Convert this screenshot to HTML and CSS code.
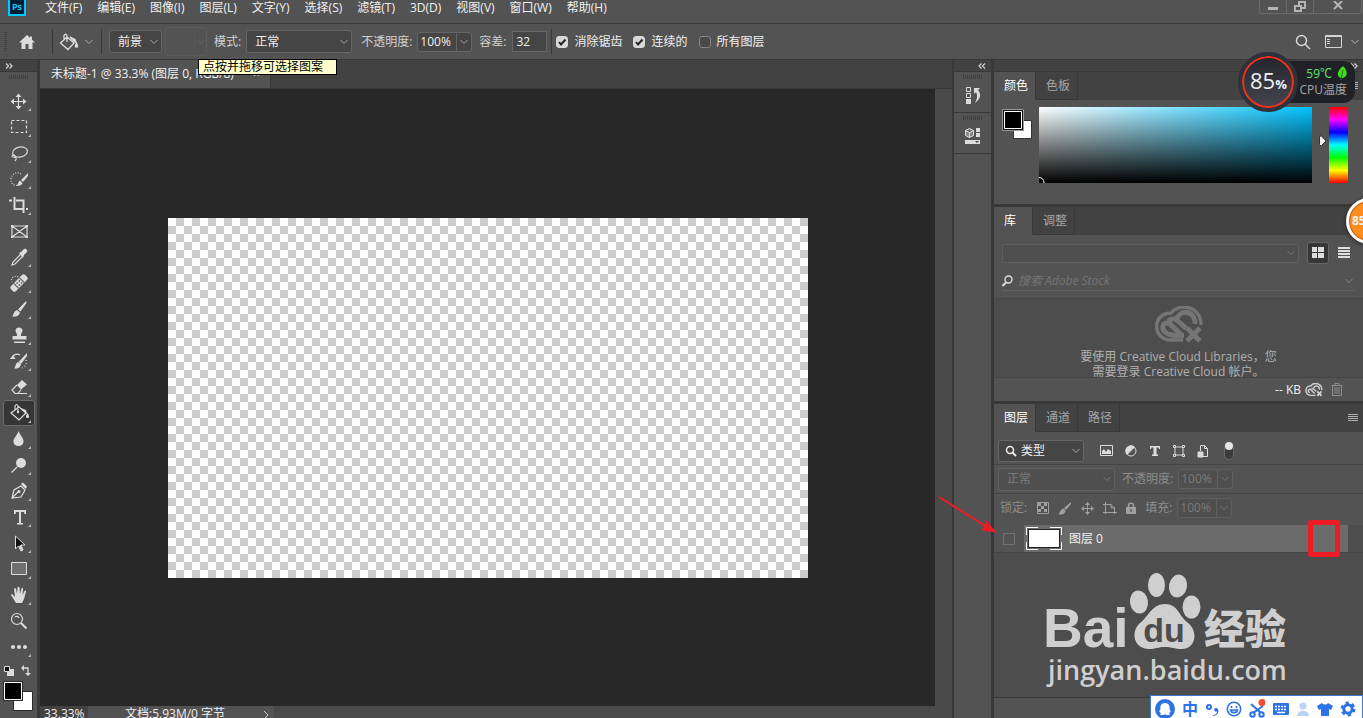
FILE: index.html
```html
<!DOCTYPE html>
<html lang="zh-CN">
<head>
  <meta charset="UTF-8" />
  <meta name="viewport" content="width=device-width, initial-scale=1.0"/>
  <title>未标题-1</title>
  <link rel="stylesheet" href="styles.css">
</head>
<body>

  <!-- Menu bar -->
  <header class="menubar">
    <svg class="logo" width="18" height="18" viewBox="0 0 18 18"><rect x="1" y="1" width="16" height="16" fill="#001d33" stroke="#00c8ff" stroke-width="2"/><text x="9" y="12" text-anchor="middle" font-size="9" font-weight="bold" fill="#00c8ff">Ps</text></svg>
    <nav class="menus">
      <a href="#">文件(F)</a>
      <a href="#">编辑(E)</a>
      <a href="#">图像(I)</a>
      <a href="#">图层(L)</a>
      <a href="#">文字(Y)</a>
      <a href="#">选择(S)</a>
      <a href="#">滤镜(T)</a>
      <a href="#">3D(D)</a>
      <a href="#">视图(V)</a>
      <a href="#">窗口(W)</a>
      <a href="#">帮助(H)</a>
    </nav>
    <div class="window-buttons">
      <button aria-label="最小化"><svg width="12" height="12" viewBox="0 0 12 12"><path d="M1 6h10v3H1z" fill="#b5b5b5"/></svg></button>
      <button aria-label="还原"><svg width="12" height="12" viewBox="0 0 12 12" fill="none" stroke="#b5b5b5" stroke-width="2"><path d="M5 4V1h6v6H8M1 5h6v5H1z"/></svg></button>
      <button aria-label="关闭" class="close"><svg width="12" height="12" viewBox="0 0 12 12" stroke="#b5b5b5" stroke-width="2"><path d="M2 0l8 8M10 0L2 8"/></svg></button>
    </div>
  </header>

  <!-- Options bar -->
  <div class="options">
    <span class="grip-v"></span>
    <button class="home" aria-label="主页"><svg width="18" height="16" viewBox="0 0 18 16" fill="#dcdcdc"><path d="M9 1L1 8.500h2.500V15h4v-5h3v5h4V8.500H17L14 5.700V2.500h-2v1.300z"/></svg></button>
    <span class="sep"></span>
    <button class="bucket" aria-label="油漆桶">
      <svg width="20" height="18" viewBox="0 0 20 18" fill="none" stroke="#dcdcdc" stroke-width="1.300"><path d="M8 4l7 6-6 6.500-7.500-6.500zM5 8V2.500Q6.500 0 8 2.500V9"/><path d="M11 4l5 2.500 1 3-3-2zM17.500 10c1.500 3 1.500 4 0 4s-1.500-1 0-4z" fill="#dcdcdc"/></svg>
      <svg width="8" height="6" viewBox="0 0 8 6" fill="none" stroke="#aaa"><path d="M.5 1L4 4.500 7.500 1"/></svg>
    </button>
    <span class="sep"></span>
    <select class="select fill-source" aria-label="填充源"><option>前景</option></select>
    <button class="pattern" aria-label="图案" disabled><span></span></button>
    <label for="mode" class="muted">模式:</label>
    <select id="mode" class="select mode"><option>正常</option></select>
    <label for="opacity" class="muted opacity-label">不透明度:</label>
    <span class="combo"><input id="opacity" type="text" value="100%"><button aria-label="不透明度滑块"></button></span>
    <label for="tolerance" class="muted">容差:</label>
    <input id="tolerance" class="number" type="text" value="32">
    <span class="sep"></span>
    <label class="check"><input type="checkbox" checked>消除锯齿</label>
    <label class="check"><input type="checkbox" checked>连续的</label>
    <label class="check"><input type="checkbox">所有图层</label>
    <div class="options-right">
      <button aria-label="搜索"><svg width="16" height="16" viewBox="0 0 16 16" fill="none" stroke="#d5d5d5" stroke-width="1.500"><circle cx="6.500" cy="6.500" r="5"/><path d="M10 10l5 5"/></svg></button>
      <button aria-label="工作区">
        <svg width="17" height="13" viewBox="0 0 17 13" fill="none" stroke="#d5d5d5"><path d="M.5.5h16v12H.5zM.5 1.500h16"/><path d="M2 4.500h3M2 6.500h3M2 8.500h3"/></svg>
        <svg width="8" height="6" viewBox="0 0 8 6" fill="none" stroke="#bbb"><path d="M.5 1L4 4.500 7.500 1"/></svg>
      </button>
    </div>
    <div class="tooltip">点按并拖移可选择图案</div>
  </div>

  <main class="workspace">

    <!-- Tools -->
    <aside class="tools">
      <div class="strip left"><svg width="8" height="6" viewBox="0 0 8 6" fill="none" stroke="#ccc" stroke-width="1.300"><path d="M1 .5L3.500 3 1 5.500M4.500.5L7 3 4.500 5.500"/></svg></div>
      <span class="grip"></span>
      <button class="tool" aria-label="移动"><svg viewBox="0 0 32 26"><path class="l" d="M15.500 7v13M9.500 13.500h12"/><path class="f" d="M15.500 5.500l3 3.500h-6zM15.500 21.500l3-3.500h-6zM7.500 13.500l3.500-3v6zM23.500 13.500l-3.500-3v6z"/><path class="t" d="M28 20v3h-3z"/></svg></button>
      <button class="tool" aria-label="选框"><svg viewBox="0 0 32 26"><path class="l" stroke-dasharray="3 2" d="M8.500 6.500h15v12h-15z"/><path class="t" d="M28 20v3h-3z"/></svg></button>
      <button class="tool" aria-label="套索"><svg viewBox="0 0 32 26"><ellipse class="l" cx="17" cy="12" rx="7.500" ry="5" transform="rotate(-12 17 12)"/><path class="l" d="M11 15c-3 0-2 3 1 2 1-1-1-2-1-2M12 17c2 1 1 3 0 4"/><path class="t" d="M28 20v3h-3z"/></svg></button>
      <button class="tool" aria-label="快速选择"><svg viewBox="0 0 32 26"><path class="l" stroke-dasharray="1 1.500" d="M18 8c-4-3-10 0-10 5.500s4 6 6 6"/><path class="f" d="M25 7v3l-5 6-2-2zM17 14.500l2.500 2.500c-1 3-4 3-6 2.500 2-1 1.500-4 3.500-5z"/><path class="t" d="M28 20v3h-3z"/></svg></button>
      <button class="tool" aria-label="裁剪"><svg viewBox="0 0 32 26"><path class="b" d="M6 8.500h3M11.500 5v12H20M23 17h2M13 8.500h7.500V21"/><path class="t" d="M28 20v3h-3z"/></svg></button>
      <button class="tool" aria-label="图框"><svg viewBox="0 0 32 26"><path class="l" d="M9 8h15v11H9zM9 8l15 11M24 8L9 19"/><path class="f" d="M8 7h2v2H8zM23 7h2v2h-2zM8 18h2v2H8zM23 18h2v2h-2z"/></svg></button>
      <button class="tool" aria-label="吸管"><svg viewBox="0 0 32 26"><path class="l" d="M17.500 10.500L10 18l-1 3 3-1 7.500-7.500"/><path class="f" d="M16 9l2-1 3-3c2-1 4 1 3 3l-3 3-1 3z"/><path class="t" d="M28 20v3h-3z"/></svg></button>
      <button class="tool" aria-label="修复画笔"><svg viewBox="0 0 32 26"><path class="l" stroke-dasharray="1 1.500" d="M15 7c-3-2-8 1-6 5"/><g transform="rotate(-45 16 13)"><rect class="f" x="6" y="9.500" width="20" height="7" rx="2"/><path d="M12 9.500v7M20 9.500v7" stroke="#535353"/><path d="M14 11h1.500v1.500H14zM17 11h1.500v1.500H17zM14 14h1.500v1.500H14zM17 14h1.500v1.500H17z" fill="#535353"/></g><path class="t" d="M28 20v3h-3z"/></svg></button>
      <button class="tool" aria-label="画笔"><svg viewBox="0 0 32 26"><path class="f" d="M23 5l.5 2-6 8.500-2.500-2zM14 14l3 2.500c-1 4-5 4.500-8 4 2-1.500 1-5 5-6.500z"/><path class="t" d="M28 20v3h-3z"/></svg></button>
      <button class="tool" aria-label="图章"><svg viewBox="0 0 32 26"><path class="f" d="M14 13c0-2-1.500-2.500-1.500-4.500 0-4 7-4 7 0 0 2-1.500 2.500-1.500 4.500v1h5.500v3.500h-14V14H14zM11 19.500h11V21H11z"/><path class="t" d="M28 20v3h-3z"/></svg></button>
      <button class="tool" aria-label="历史记录画笔"><svg viewBox="0 0 32 26"><path class="f" d="M24 5v3l-6 8-2.500-2zM15 14l3 2.500c-1 3.500-4 4.500-7 4 2-1.500 1-5 4-6.500zM7 11l3-4 2.500 4z"/><path class="l" d="M10 8c2-2 5-2 7-1"/><path class="l" stroke-dasharray="1 2" d="M23 12c1 4-1 7-4 8"/><path class="t" d="M28 20v3h-3z"/></svg></button>
      <button class="tool" aria-label="橡皮擦"><svg viewBox="0 0 32 26"><path class="f" d="M14 11l5-5 5 4.500-6 5z"/><path class="l" d="M14 11l-5 5 3 3.500h3l3-4M14 19.500h10"/><path class="t" d="M28 20v3h-3z"/></svg></button>
      <button class="tool selected" aria-label="油漆桶"><svg viewBox="0 0 32 26"><path class="l" d="M16 7l7 6-7 7-8-7zM12 11V6q1.500-3 3 0v6"/><circle class="f" cx="15" cy="12" r="1.200"/><path class="f" d="M18 8l5 2 1 4-3-2zM24.500 13c2 3 2 5 0 5s-2-2 0-5z"/><path class="t" d="M28 20v3h-3z"/></svg></button>
      <button class="tool" aria-label="模糊"><svg viewBox="0 0 32 26"><path class="f" d="M15.500 5c2 5 5 6.500 5 10.500 0 6-10 6-10 0C10.500 11.500 14 10 15.500 5z"/><path class="t" d="M28 20v3h-3z"/></svg></button>
      <button class="tool" aria-label="减淡"><svg viewBox="0 0 32 26"><circle class="f" cx="18" cy="11" r="5"/><path class="l" stroke-width="2" d="M14 15l-5.500 5.500"/><path class="t" d="M28 20v3h-3z"/></svg></button>
      <button class="tool" aria-label="钢笔"><svg viewBox="0 0 32 26"><path class="l" d="M9 20l2-8 7-4 4 4-4 7zM9 20l6-6"/><path class="f" d="M18 6l2-1.500 4 4-1.500 2.500z"/><circle class="f" cx="16" cy="13.500" r="1.500"/><path class="t" d="M28 20v3h-3z"/></svg></button>
      <button class="tool" aria-label="文字"><svg viewBox="0 0 32 26"><path class="f" d="M11 6h12v4h-1.500l-.5-2h-3v11h2v1.500h-6V19h2V8h-3l-.5 2H11z"/><path class="t" d="M28 20v3h-3z"/></svg></button>
      <button class="tool" aria-label="路径选择"><svg viewBox="0 0 32 26"><path d="M12.500 6v13l3-3 2.500 5 2-1-2-5h4z" fill="#111" stroke="#dcdcdc"/><path class="f" d="M16 16l2-1 2 5-2 1z"/><path class="t" d="M28 20v3h-3z"/></svg></button>
      <button class="tool" aria-label="矩形"><svg viewBox="0 0 32 26"><path d="M8.500 6.500h15v12h-15z" fill="#707070" stroke="#dcdcdc"/><path class="t" d="M28 20v3h-3z"/></svg></button>
      <button class="tool" aria-label="抓手"><svg viewBox="0 0 32 26"><path class="f" d="M13 21l-5-8c0-1.500 1.500-1.500 2 0l2 2-1-8c.5-1.500 1.500-1.500 2 0l1 5 .5-6.500c.5-1 1.500-1 2 0l.5 6.500 1.500-5.500c.5-1 2-1 1.500.5L19.500 13l2-4c1-1 2-.5 1.500.5L21 17l-2 4z"/><path class="t" d="M28 20v3h-3z"/></svg></button>
      <button class="tool" aria-label="缩放"><svg viewBox="0 0 32 26"><circle class="l" cx="14" cy="11" r="5.500"/><path class="b" d="M18 15l5.500 5.500"/><path class="l" d="M12 9c1-1 3-1 4 1"/></svg></button>
      <button class="tool" aria-label="更多"><svg viewBox="0 0 32 26"><circle class="f" cx="10" cy="13" r="2"/><circle class="f" cx="16" cy="13" r="2"/><circle class="f" cx="22" cy="13" r="2"/><path class="t" d="M28 20v3h-3z"/></svg></button>
      <svg class="tool-colors" width="34" height="54" viewBox="0 0 34 54">
        <path d="M7 9h7v7H7z" fill="#dcdcdc"/><path d="M4.500 6.500h5v5h-5z" fill="#111" stroke="#dcdcdc"/>
        <path d="M23 8h5v6" fill="none" stroke="#dcdcdc" stroke-width="1.300"/><path d="M24 5v6l-3-3zM25 13h6l-3 3z" fill="#dcdcdc"/>
        <path d="M13.500 31.500h19v19h-19z" fill="#fff" stroke="#2b2b2b"/>
        <path d="M3 21h20v20H3z" fill="#2b2b2b"/><path d="M4.500 22.500h17v17h-17z" fill="#000" stroke="#fff"/>
      </svg>
    </aside>

    <!-- Document -->
    <section class="document">
      <div class="doc-tabs">
        <div class="doc-tab"><span>未标题-1 @ 33.3% (图层 0, RGB/8)</span><button aria-label="关闭文档">×</button></div>
      </div>
      <div class="doc-view">
        <div class="stage"><div class="artboard"></div></div>
        <div class="scrollbar"></div>
      </div>
      <div class="status">
        <span class="zoom">33.33%</span>
        <div class="doc-info"><span>文档:5.93M/0 字节</span><svg width="6" height="10" viewBox="0 0 6 10" fill="none" stroke="#ccc"><path d="M1 1l4 4-4 4"/></svg></div>
      </div>
    </section>

    <!-- Collapsed dock -->
    <aside class="dock">
      <div class="strip right"><svg width="8" height="6" viewBox="0 0 8 6" fill="none" stroke="#ccc" stroke-width="1.300"><path d="M3.500.5L1 3l2.500 2.500M7 .5L4.500 3 7 5.500"/></svg></div>
      <button aria-label="历史记录"><span class="grip"></span><svg width="18" height="18" viewBox="0 0 18 18"><path d="M2.500 1.500h4v4h-4zM2.500 7.500h4v4h-4z" fill="none" stroke="#dcdcdc"/><path d="M2 13h5v5H2zM10 2h6l-2 2c4 5 2 9-3 13 2-4 3-7 1-11l-2 2z" fill="#dcdcdc"/></svg></button>
      <button aria-label="属性"><span class="grip"></span><svg width="18" height="18" viewBox="0 0 18 18"><path d="M5.500 1.500l4 2v5l-4 2-4-2v-5zM1.500 3.500l4 2 4-2M5.500 5.500v5" fill="#888" stroke="#dcdcdc"/><path d="M12 1h4v4h-4zM12 6h4v4h-4zM1 13h15v4H1z" fill="#dcdcdc"/><path d="M11 14h4l-2 2z" fill="#444"/></svg></button>
    </aside>

    <!-- Panels -->
    <aside class="panels">
      <div class="strip right"><svg width="8" height="6" viewBox="0 0 8 6" fill="none" stroke="#ccc" stroke-width="1.300"><path d="M1 .5L3.500 3 1 5.500M4.500.5L7 3 4.500 5.500"/></svg></div>

      <section class="panel color-panel">
        <div class="tabs">
          <button class="tab active">颜色</button><button class="tab">色板</button>
          <button class="panel-menu" aria-label="面板菜单"><svg width="10" height="8" viewBox="0 0 10 8" stroke="#b0b0b0"><path d="M0 .5h10M0 2.500h10M0 4.500h10M0 6.500h10"/></svg></button>
        </div>
        <div class="color-body">
          <svg class="swatches" width="32" height="34" viewBox="0 0 32 34"><path d="M11.500 13.500h18v18h-18z" fill="#fff" stroke="#333"/><path d="M.5 2.500h21v21h-21z" fill="#111" stroke="#999"/><path d="M2.500 4.500h17v17h-17z" fill="#000" stroke="#fff"/></svg>
          <div class="spectrum"><svg width="8" height="8" viewBox="0 0 8 8" fill="none" stroke="#fff"><path d="M0 2.500c3 0 5 2 5 5.500"/></svg></div>
          <svg class="hue-arrow" width="8" height="12" viewBox="0 0 8 12"><path d="M.5 2q0-1.500 2-1L7 6l-4.500 4.500q-2 .5-2-1z" fill="#eee" stroke="#333"/></svg>
          <div class="hue"></div>
        </div>
      </section>

      <section class="panel library-panel">
        <div class="tabs"><button class="tab active">库</button><button class="tab">调整</button></div>
        <div class="library-head">
          <div class="library-row">
            <select class="select dim" aria-label="库" disabled></select>
            <button class="view-btn on" aria-label="网格"><svg width="12" height="12" viewBox="0 0 12 12" fill="#ddd"><path d="M0 0h5v5H0zM6 0h6v5H6zM0 6h5v5H0zM6 6h6v5H6z"/></svg></button>
            <button class="view-btn" aria-label="列表"><svg width="12" height="12" viewBox="0 0 12 12" fill="#ddd"><path d="M0 0h12v2H0zM0 3h12v2H0zM0 6h12v2H0zM0 9h12v2H0z"/></svg></button>
          </div>
          <div class="search">
            <svg width="12" height="12" viewBox="0 0 12 12" fill="none" stroke="#ddd"><circle cx="6.500" cy="4.500" r="3.500" stroke-width="1.400"/><path d="M4 7.500L.5 11" stroke-width="2"/></svg>
            <input type="text" placeholder="搜索 Adobe Stock" aria-label="搜索 Adobe Stock" disabled>
            <svg width="8" height="6" viewBox="0 0 8 6" fill="none" stroke="#888"><path d="M.5 1L4 4.500 7.500 1"/></svg>
          </div>
        </div>
        <div class="library-body">
          <svg width="50" height="38" viewBox="0 0 50 38" fill="none" stroke="#757575" stroke-width="3.500"><path d="M29 34H16C-2 33-2 7 17 7 24-3 47-1 47 19"/><path d="M30 29.500h-2L16 18c-6-4-10 4-5 8 3 3 10 4 15 3M14 15c5-4 8-2 11 1l9 8M23 12c5-10 19-6 18 6" stroke-width="5"/><path d="M33 22l13 13M46 22L33 35" stroke="#4d4d4d" stroke-width="8"/><path d="M33 22l13 13M46 22L33 35" stroke-width="5"/></svg>
          <p>要使用 Creative Cloud Libraries，您<br>需要登录 Creative Cloud 帐户。</p>
        </div>
        <div class="library-foot">
          <span>-- KB</span>
          <svg width="18" height="14" viewBox="0 0 50 38" fill="none" stroke="#d0d0d0" stroke-width="4"><path d="M29 34H16C-2 33-2 7 17 7 24-3 47-1 47 19"/><path d="M27 29L16 18c-6-4-10 6-3 9M18 14c4-1 8 4 14 9M24 13c5-9 17-5 16 5"/><path d="M33 22l13 13M46 22L33 35" stroke="#535353" stroke-width="9"/><path d="M34 23l12 12M46 23L34 35" stroke-width="5"/></svg>
          <button aria-label="删除"><svg width="12" height="13" viewBox="0 0 12 13" fill="none" stroke="#8c8c8c"><path d="M.5 2.500h11M4 2V.5h4V2M1.500 3v9.500h9V3M4 4v7M6 4v7M8 4v7"/></svg></button>
        </div>
      </section>

      <section class="panel layers-panel">
        <div class="tabs">
          <button class="tab active">图层</button><button class="tab">通道</button><button class="tab">路径</button>
          <button class="panel-menu" aria-label="面板菜单"><svg width="10" height="8" viewBox="0 0 10 8" stroke="#b0b0b0"><path d="M0 .5h10M0 2.500h10M0 4.500h10M0 6.500h10"/></svg></button>
        </div>
        <div class="layer-row filter-row">
          <span class="filter"><svg width="12" height="12" viewBox="0 0 12 12" fill="none" stroke="#eee" stroke-width="1.500"><circle cx="5" cy="5" r="3.500"/><path d="M7.500 7.500L11 11" stroke-width="2"/></svg><select class="bare" aria-label="过滤"><option>类型</option></select></span>
          <div class="filter-icons">
            <button aria-label="像素"><svg width="13" height="12" viewBox="0 0 13 12"><path d="M.5.5h12v10H.5z" fill="none" stroke="#dcdcdc"/><path d="M2 9V6l2-2 2 3 2-3 3 2v3z" fill="#dcdcdc"/></svg></button>
            <button aria-label="调整图层"><svg width="12" height="12" viewBox="0 0 12 12"><circle cx="6" cy="6" r="5" fill="none" stroke="#dcdcdc"/><path d="M10 2a5.500 5.500 0 0 0-8 8z" fill="#dcdcdc"/></svg></button>
            <button aria-label="文字图层"><svg width="12" height="12" viewBox="0 0 12 12" fill="#dcdcdc"><path d="M1 1h10v3h-1L9.500 2.500h-2V9.500H9V11H3V9.500h1.500v-7h-2L2 4H1z"/></svg></button>
            <button aria-label="形状"><svg width="12" height="12" viewBox="0 0 12 12" fill="none" stroke="#dcdcdc"><path d="M2 2h8v8H2z"/><path d="M.5.5h2v2h-2zM9.500.5h2v2h-2zM.5 9.500h2v2h-2zM9.500 9.500h2v2h-2z" fill="#555"/></svg></button>
            <button aria-label="智能对象"><svg width="12" height="13" viewBox="0 0 12 13" fill="none" stroke="#dcdcdc"><path d="M3.500 6V.5h4l3 3v8H6M7.500.5v3h3"/><path d="M1 7h5v5H1z" fill="#dcdcdc"/></svg></button>
            <button class="toggle" aria-label="过滤开关"><svg width="12" height="20" viewBox="0 0 12 20"><rect x="1.500" y="2.500" width="9" height="16" rx="4.500" fill="#3b3b3b" stroke="#6a6a6a"/><circle cx="6" cy="5" r="4" fill="#e6e6e6"/></svg></button>
          </div>
        </div>
        <div class="layer-row blend-row">
          <select class="select dim" aria-label="混合模式" disabled><option>正常</option></select>
          <label for="layer-opacity">不透明度:</label>
          <span class="combo dim"><input id="layer-opacity" type="text" value="100%" disabled><button aria-label="图层不透明度滑块" disabled></button></span>
        </div>
        <div class="layer-row lock-row">
          <span class="lock-label">锁定:</span>
          <div class="locks">
            <button aria-label="锁定透明像素"><svg width="12" height="12" viewBox="0 0 12 12"><path d="M.5.5h11v11H.5z" fill="#505050" stroke="#a0a0a0"/><path d="M1 1h3v3H1zM7 1h3v3H7zM4 4h3v3H4zM1 7h3v3H1zM7 7h3v3H7z" fill="#a0a0a0"/></svg></button>
            <button aria-label="锁定图像"><svg width="14" height="13" viewBox="0 0 14 13" fill="#a0a0a0"><path d="M13 0v2L8 8 6 6zM5.500 6.500l2 2C7 12 4 13 0 12.500c2-1 2-5 5.500-6z"/></svg></button>
            <button aria-label="锁定位置"><svg width="13" height="13" viewBox="0 0 13 13" fill="#a0a0a0" stroke="#a0a0a0"><path d="M6.500 1v11M1 6.500h11"/><path stroke="none" d="M6.500 0L9 3H4zM6.500 13L9 10H4zM0 6.500L3 4v5zM13 6.500L10 4v5z"/></svg></button>
            <button aria-label="锁定画板"><svg width="14" height="14" viewBox="0 0 14 14" fill="none" stroke="#a0a0a0"><path d="M2.500 1v12M0 3.500h8M0 11.500h14M11.500 13V6M8 3.500L11.500 7M8 3v4h4"/></svg></button>
            <button aria-label="全部锁定"><svg width="10" height="12" viewBox="0 0 10 12"><path d="M2.500 6V3.500c0-3 5-3 5 0V6" fill="none" stroke="#a0a0a0" stroke-width="1.600"/><path d="M0 5h10v7H0z" fill="#a0a0a0"/><path d="M4.500 7h1v3h-1z" fill="#444"/></svg></button>
          </div>
          <label for="fill">填充:</label>
          <span class="combo dim"><input id="fill" type="text" value="100%" disabled><button aria-label="填充滑块" disabled></button></span>
        </div>
        <div class="layer-list">
          <div class="layer">
            <label class="eye"><input type="checkbox" aria-label="图层可见性"></label>
            <div class="layer-main">
              <svg width="36" height="24" viewBox="0 0 36 24"><path d="M2 2h32v19H2z" fill="#222"/><path d="M3 3h30v17H3z" fill="#fff"/><path d="M.5 8V.5H12M24 .5h11.500V8M35.500 15v7.500H24M12 22.500H.5V15" fill="none" stroke="#fff"/></svg>
              <span>图层 0</span>
              <i class="marker"></i>
            </div>
          </div>
        </div>
        <div class="layer-foot"></div>
      </section>
    </aside>
  </main>

  <!-- Arrow pointing at the layer visibility box -->
  <svg class="arrow" width="62" height="42" viewBox="0 0 62 42"><path d="M2 3l48 30" stroke="#ed1c24" stroke-width="2"/><path d="M60 39l-16-3 4-4 1-6z" fill="#ed1c24"/></svg>

  <!-- Watermark -->
  <svg class="watermark" width="246" height="122" viewBox="16 8 246 122" fill="#cfcfcf">
    <text x="13" y="87" class="wm-bai">Bai</text>
    <ellipse cx="109" cy="42" rx="9" ry="11.500" transform="rotate(-8 109 42)"/>
    <ellipse cx="126.500" cy="25" rx="8.500" ry="12"/>
    <ellipse cx="148" cy="26" rx="9" ry="11.500" transform="rotate(10 148 26)"/>
    <ellipse cx="161.500" cy="47" rx="9" ry="11.500"/>
    <path d="M135 44c13 0 14 12 22 18 12 9 9 27-5 27-8 0-10-2-17-2s-9 2-16 2c-15 0-19-17-9-26 9-7 12-19 25-19z"/>
    <text x="134" y="82" text-anchor="middle" class="wm-du">du</text>
    <text x="174" y="84" class="wm-cn">经验</text>
    <text x="18" y="120" class="wm-url">jingyan.baidu.com</text>
  </svg>

  <!-- Temperature widget -->
  <div class="monitor">
    <div class="gauge"><b>85</b><small>%</small></div>
    <div class="cpu">
      <span class="temp">59℃ <svg width="10" height="14" viewBox="0 0 10 14"><path d="M6 0c5 5 5 10 0 12H4C-1 10 0 5 6 0z" fill="#3fdc1e"/><path d="M6 4L4 14" stroke="#1c7a10"/></svg></span>
      <span>CPU温度</span>
    </div>
  </div>
  <div class="ball">85</div>

  <!-- Input method bar -->
  <div class="ime">
    <button aria-label="输入法"><svg width="20" height="20" viewBox="0 0 20 20"><circle cx="10" cy="10" r="10" fill="#2c73e8"/><path d="M6 14c-3-1-1-3-.500-4C4 2 16 2 14.500 10c.500 1 2.500 3-.500 4l1 2h-4l-1-1-1 1H5z" fill="#fff"/></svg></button>
    <button class="cn">中</button>
    <button aria-label="标点"><svg width="14" height="16" viewBox="0 0 14 16"><circle cx="4" cy="6" r="2" fill="none" stroke="#2c73e8" stroke-width="2"/><path d="M8 14c3 0 4-2 4-3.500-3 1-4-3-1-3.500 4 0 3 8-3 8z" fill="#2c73e8"/></svg></button>
    <button aria-label="表情"><svg width="16" height="16" viewBox="0 0 16 16" fill="none" stroke="#2c73e8" stroke-width="1.600"><circle cx="8" cy="8" r="6.700"/><path d="M4.500 9c1 3.500 6 3.500 7 0zM5.500 5v2M10.500 5v2"/></svg></button>
    <button aria-label="截图"><svg width="16" height="20" viewBox="0 0 16 20" fill="none" stroke="#2c73e8" stroke-width="2"><path d="M2 5l10 9M14 7L4 14"/><circle cx="3.500" cy="15.500" r="2.200"/><circle cx="12.500" cy="15.500" r="2.200"/><circle cx="13" cy="3.500" r="3.500" fill="#fa4b2a" stroke="none"/></svg></button>
    <button aria-label="键盘"><svg width="16" height="13" viewBox="0 0 16 13"><rect width="16" height="12" rx="1" fill="#2c73e8"/><path d="M2 3.500h12M2 6.500h12" stroke="#fff" stroke-dasharray="2 1" stroke-width="1.500"/><path d="M4 9.500h8" stroke="#fff" stroke-width="1.500"/></svg></button>
    <button aria-label="账户"><svg width="14" height="16" viewBox="0 0 14 16" fill="#bcd3f8"><circle cx="7" cy="5" r="3.500"/><path d="M1 15c0-7 12-7 12 0z"/></svg></button>
    <button aria-label="皮肤"><svg width="16" height="14" viewBox="0 0 16 14" fill="#2c73e8"><path d="M5 1c1 2 5 2 6 0l5 3-2 4-2-1v7H4V7L2 8 0 4z"/></svg></button>
    <button aria-label="设置"><svg width="16" height="16" viewBox="0 0 16 16" fill="none" stroke="#2c73e8"><circle cx="8" cy="8" r="4.200" stroke-width="3"/><circle cx="8" cy="8" r="6.200" stroke-width="2.500" stroke-dasharray="3.250 3.250"/></svg></button>
  </div>

</body>
</html>
```
FILE: styles.css
```css
:root {
  --panel: #535353;
  --dark: #424242;
  --line: #383838;
  --field: #454545;
  --border: #666666;
  --text: #f0f0f0;
  --muted: #d0d0d0;
  --dim: #8c8c8c;
  --chevron: url("data:image/svg+xml,%3Csvg xmlns='http://www.w3.org/2000/svg' width='8' height='6' fill='none' stroke='%23aaa'%3E%3Cpath d='M.5 1L4 4.500 7.500 1'/%3E%3C/svg%3E");
  --chevron-dim: url("data:image/svg+xml,%3Csvg xmlns='http://www.w3.org/2000/svg' width='8' height='6' fill='none' stroke='%23777'%3E%3Cpath d='M.5 1L4 4.500 7.500 1'/%3E%3C/svg%3E");
}

* {
  margin: 0;
  padding: 0;
  box-sizing: border-box;
}

body {
  display: flex;
  flex-direction: column;
  height: 100vh;
  overflow: hidden;
  position: relative;
  background: var(--panel);
  color: var(--text);
  font: 12px/16px "Open Sans", "Noto Sans CJK SC", sans-serif;
}

button, input, select {
  font: inherit;
  color: inherit;
  background: none;
  border: none;
  border-radius: 0;
  appearance: none;
}

button {
  display: flex;
  align-items: center;
  justify-content: center;
  flex: none;
}

a {
  color: inherit;
  text-decoration: none;
}

svg {
  display: block;
  flex: none;
}

/* Menu bar */
.menubar {
  display: flex;
  align-items: flex-start;
  height: 24px;
  border-bottom: 1px solid var(--line);
  padding-left: 8px;
}

.logo {
  margin-top: -2px;
}

.menus {
  display: flex;
  gap: 15px;
  margin-left: 19px;
}

.window-buttons {
  display: flex;
  height: 14px;
  margin-left: auto;
  margin-right: 1px;
  border: 1px solid #6a6a6a;
  border-top: none;
  border-radius: 0 0 3px 3px;
}

.window-buttons button {
  width: 27px;
  border-right: 1px solid #6a6a6a;
}

.window-buttons .close {
  width: 47px;
  border-right: none;
}

/* Options bar */
.options {
  position: relative;
  display: flex;
  align-items: center;
  height: 36px;
  border-bottom: 1px solid var(--line);
  white-space: nowrap;
}

.grip-v {
  width: 3px;
  height: 20px;
  margin-left: 4px;
  background: repeating-linear-gradient(#3f3f3f 0 1px, transparent 1px 2px);
}

.home {
  width: 45px;
  padding-right: 5px;
}

.sep {
  width: 1px;
  height: 25px;
  background: var(--line);
}

.bucket {
  width: 48px;
  gap: 6px;
  padding-right: 2px;
}

.select {
  height: 23px;
  padding-left: 8px;
  border: 1px solid var(--border);
  border-radius: 3px;
  background: var(--field) var(--chevron) no-repeat right 3px center;
}

.fill-source {
  width: 53px;
  margin-left: 7px;
}

.pattern {
  width: 42px;
  height: 29px;
  margin: 0 7px 0 3px;
  border: 1px solid #5c5c5c;
  border-radius: 3px;
  justify-content: flex-end;
}

.pattern span {
  width: 12px;
  height: 27px;
  border-left: 1px solid #5c5c5c;
  background: var(--chevron-dim) no-repeat center;
  opacity: 0.5;
}

.muted {
  color: var(--muted);
}

.mode {
  width: 106px;
  margin-left: 5px;
}

.opacity-label {
  margin-left: 9px;
}

.combo {
  display: flex;
  height: 20px;
  margin: 0 7px 0 5px;
  border: 1px solid var(--border);
  border-radius: 3px;
  background: var(--field);
}

.combo input {
  width: 38px;
  padding-left: 2px;
}

.combo button {
  width: 15px;
  border-left: 1px solid var(--border);
  background: var(--chevron) no-repeat center;
}

.number {
  width: 35px;
  height: 21px;
  margin: 0 4px 0 6px;
  padding-left: 3px;
  border: 1px solid var(--border);
  background: var(--field);
}

.check {
  display: flex;
  align-items: center;
  gap: 6px;
  margin-left: 4px;
  margin-right: 7px;
}

.check input {
  width: 12px;
  height: 12px;
  border: 1px solid #858585;
  border-radius: 3px;
  background: #484848;
}

.check input:checked {
  border-color: #d8d8d8;
  background: #d8d8d8 url("data:image/svg+xml,%3Csvg xmlns='http://www.w3.org/2000/svg' width='10' height='10' fill='none' stroke='%23222' stroke-width='2'%3E%3Cpath d='M2 5l2 2.500L8.500 2.500'/%3E%3C/svg%3E") no-repeat center;
}

.options-right {
  display: flex;
  gap: 14px;
  margin-left: auto;
  padding-right: 4px;
}

.options-right button {
  gap: 9px;
}

.tooltip {
  position: absolute;
  left: 198px;
  top: 35px;
  z-index: 5;
  width: 139px;
  height: 16px;
  padding-left: 4px;
  line-height: 14px;
  color: #000;
  background: #ffffcd;
  border: 1px solid #000;
}

/* Workspace */
.workspace {
  display: flex;
  flex: 1;
  min-height: 0;
  background: var(--line);
}

.strip {
  display: flex;
  align-items: center;
  flex: none;
  height: 12px;
  padding: 0 5px;
  background: var(--dark);
  border-bottom: 1px solid var(--line);
}

.strip.right {
  justify-content: flex-end;
}

.grip {
  flex: none;
  width: 20px;
  height: 4px;
  background: repeating-linear-gradient(90deg, #404040 0 1px, transparent 1px 2px);
}

.tools {
  display: flex;
  flex-direction: column;
  width: 37px;
  margin-right: 3px;
  background: var(--panel);
}

.tools .grip {
  margin: 3px 0 9px 9px;
}

.tool {
  width: 32px;
  height: 26px;
  margin-left: 3px;
}

.tool svg {
  width: 32px;
  height: 26px;
}

.tool.selected {
  background: #363636;
  border-radius: 3px;
  box-shadow: inset 0 0 0 1px #6a6a6a;
}

.tool .f {
  fill: #dcdcdc;
}

.tool .t {
  fill: #b8b8b8;
}

.tool .l {
  fill: none;
  stroke: #dcdcdc;
  stroke-width: 1.2px;
}

.tool .b {
  fill: none;
  stroke: #dcdcdc;
  stroke-width: 2px;
}

/* Document */
.document {
  display: flex;
  flex-direction: column;
  flex: 1;
  min-width: 0;
}

.doc-tabs {
  display: flex;
  flex: none;
  height: 29px;
  background: var(--dark);
  border-bottom: 1px solid var(--line);
}

.doc-tab {
  display: flex;
  align-items: center;
  gap: 19px;
  padding: 0 10px 0 11px;
  background: var(--panel);
  border-right: 1px solid var(--line);
  white-space: nowrap;
}

.doc-view {
  display: flex;
  flex: 1;
  min-height: 0;
}

.stage {
  display: flex;
  flex: 1;
  align-items: center;
  justify-content: center;
  padding-top: 1px;
  background: #282828;
}

.artboard {
  width: 640px;
  aspect-ratio: 16 / 9;
  background: repeating-conic-gradient(#cccccc 0 25%, #ffffff 0 50%) 0 0 / 16px 16px;
}

.scrollbar {
  width: 17px;
  background: #4a4a4a;
}

.status {
  display: flex;
  flex: none;
  height: 12px;
  overflow: hidden;
  background: #4a4a4a;
}

.zoom {
  width: 48px;
  padding-left: 4px;
  background: #424242;
}

.doc-info {
  display: flex;
  gap: 38px;
  padding: 0 5px 0 37px;
  background: var(--panel);
  white-space: nowrap;
}

.doc-info svg {
  margin-top: 4px;
}

/* Collapsed dock */
.dock {
  width: 37px;
  margin: 0 3px 0 2px;
  background: var(--panel);
}

.dock button {
  flex-direction: column;
  justify-content: flex-start;
  gap: 7px;
  width: 37px;
  height: 41px;
  padding-top: 3px;
  border-bottom: 1px solid var(--line);
}

/* Panels */
.panels {
  display: flex;
  flex-direction: column;
  width: 369px;
}

.panel {
  flex: none;
  background: var(--panel);
}

.tabs {
  display: flex;
  height: 28px;
  background: var(--dark);
}

.tab {
  justify-content: flex-start;
  min-width: 39px;
  padding: 0 7px 0 10px;
  color: #a5a5a5;
  border-right: 1px solid var(--line);
  border-bottom: 1px solid var(--line);
}

.tab.active {
  color: #ffffff;
  background: var(--panel);
  border-bottom-color: var(--panel);
}

.panel-menu {
  margin-left: auto;
  padding-right: 5px;
}

.color-panel {
  margin-bottom: 3px;
}

.color-body {
  display: flex;
  height: 104px;
  padding: 7px 15px 0 8px;
}

.spectrum {
  display: flex;
  align-items: flex-end;
  flex: 1;
  height: 76px;
  margin-left: 5px;
  background: linear-gradient(transparent, #000), linear-gradient(90deg, #fff, #00c2ff);
}

.hue-arrow {
  margin: 28px 2px 0 7px;
}

.hue {
  width: 19px;
  height: 76px;
  background: linear-gradient(#f00, #f0f, #00f, #0ff, #0f0, #ff0, #f00);
}

.library-panel {
  margin-bottom: 3px;
}

.library-head {
  height: 64px;
  padding: 7px 8px 0 8px;
  border-bottom: 1px solid #464646;
}

.library-row {
  display: flex;
  align-items: center;
}

.library-row .select {
  flex: 1;
  height: 19px;
  margin-right: 8px;
}

.view-btn {
  width: 22px;
  height: 22px;
  border-radius: 3px;
}

.view-btn.on {
  margin-right: 4px;
  background: #363636;
  border: 1px solid #666;
}

.search {
  display: flex;
  align-items: center;
  height: 20px;
  margin-top: 7px;
  padding-right: 2px;
  border-bottom: 1px solid #606060;
}

.search input {
  flex: 1;
  margin-left: 4px;
  font-style: italic;
}

.search input::placeholder {
  color: #757575;
}

.library-body {
  display: flex;
  flex-direction: column;
  align-items: center;
  gap: 5px;
  height: 78px;
  padding-top: 7px;
  background: #4d4d4d;
  color: #b0b0b0;
  text-align: center;
  line-height: 15px;
}

.library-foot {
  display: flex;
  align-items: center;
  justify-content: flex-end;
  height: 24px;
  padding-right: 20px;
  border-top: 1px solid #464646;
}

.library-foot svg {
  margin-left: 4px;
}

.library-foot button {
  margin-left: 4px;
}

/* Layers */
.layers-panel {
  display: flex;
  flex-direction: column;
  flex: 1;
}

.layers-panel .tabs {
  flex: none;
}

.layer-row {
  display: flex;
  align-items: center;
  flex: none;
  padding-left: 4px;
  color: var(--dim);
}

.filter-row {
  height: 33px;
  padding-top: 6px;
  border-bottom: 1px solid #444;
}

.filter {
  display: flex;
  align-items: center;
  gap: 4px;
  width: 86px;
  height: 22px;
  padding-left: 6px;
  color: var(--text);
  background: var(--field);
  border: 1px solid var(--border);
  border-radius: 3px;
}

.bare {
  flex: 1;
  background: var(--chevron) no-repeat right 3px center;
}

.filter-icons {
  display: flex;
  align-items: center;
  gap: 12px;
  margin-left: 16px;
}

.toggle {
  margin-left: 2px;
}

.blend-row {
  height: 29px;
  border-bottom: 1px solid #444;
}

.blend-row .select {
  width: 117px;
  margin-right: 7px;
}

.dim,
.combo.dim {
  color: #7a7a7a;
  background-color: #4f4f4f;
  border-color: #606060;
  opacity: 1;
}

.select.dim,
.combo.dim button {
  background-image: var(--chevron-dim);
  border-color: #606060;
}

.lock-row {
  height: 31px;
  padding-left: 6px;
  padding-bottom: 3px;
}

.locks {
  display: flex;
  align-items: center;
  gap: 9px;
  margin: 0 9px 0 10px;
}

.layer-list {
  flex: 1;
  background: #4d4d4d;
}

.layer {
  display: flex;
  height: 28px;
  padding-right: 15px;
  border-bottom: 1px solid #444;
}

.eye {
  display: flex;
  align-items: center;
  justify-content: center;
  width: 30px;
  background: var(--panel);
}

.eye input {
  width: 12px;
  height: 12px;
  border: 1px solid #707070;
}

.layer-main {
  position: relative;
  display: flex;
  align-items: center;
  flex: 1;
  gap: 7px;
  padding-left: 2px;
  background: #6b6b6b;
}

.marker {
  position: absolute;
  right: 8px;
  top: -5px;
  width: 32px;
  height: 37px;
  border: 5px solid #ed1c24;
  border-radius: 3px;
}

.layer-foot {
  height: 21px;
  border-top: 1px solid var(--line);
}

/* Overlays */
.arrow {
  position: absolute;
  right: 364px;
  top: 494px;
}

.watermark {
  position: absolute;
  right: 71px;
  bottom: 28px;
}

.wm-bai {
  font: bold 55px "Liberation Sans", sans-serif;
}

.wm-du {
  font: bold 34px "Liberation Sans", sans-serif;
  fill: #4d4d4d;
}

.wm-cn {
  font: 900 41px "Noto Sans CJK SC", sans-serif;
}

.wm-url {
  font: 600 27px "Open Sans", sans-serif;
}

.monitor {
  position: absolute;
  right: 8px;
  top: 52px;
  display: flex;
  align-items: center;
}

.gauge {
  display: flex;
  align-items: baseline;
  justify-content: center;
  z-index: 1;
  width: 60px;
  height: 60px;
  border: 4px solid #30323b;
  border-radius: 50%;
  line-height: 48px;
  background: linear-gradient(#24252d, #454650);
  box-shadow: inset 0 0 0 2px #f3321b;
}

.gauge b {
  font-size: 22px;
  font-weight: normal;
}

.gauge small {
  font-size: 13px;
  font-weight: bold;
}

.cpu {
  display: flex;
  flex-direction: column;
  align-items: flex-end;
  height: 42px;
  margin-left: -20px;
  padding: 5px 8px 0 21px;
  border-radius: 12px;
  color: #a5a5a5;
  background: #202127;
}

.temp {
  display: flex;
  gap: 5px;
  color: #5fe36a;
}

.ball {
  position: absolute;
  right: -29px;
  top: 198px;
  width: 46px;
  height: 46px;
  padding-left: 3px;
  line-height: 40px;
  font-weight: bold;
  border: 3px solid #fff;
  border-radius: 50%;
  background: #ff8c1e;
  box-shadow: inset 0 0 0 1px #b85c10, 0 1px 4px #222;
}

.ime {
  position: absolute;
  right: 0;
  bottom: -5px;
  display: flex;
  align-items: center;
  justify-content: space-between;
  width: 213px;
  height: 28px;
  padding: 0 6px 0 4px;
  border: 1px solid #3f78d0;
  background: #fff;
}

.cn {
  font-size: 16px;
  font-weight: bold;
  color: #2c73e8;
}
```
